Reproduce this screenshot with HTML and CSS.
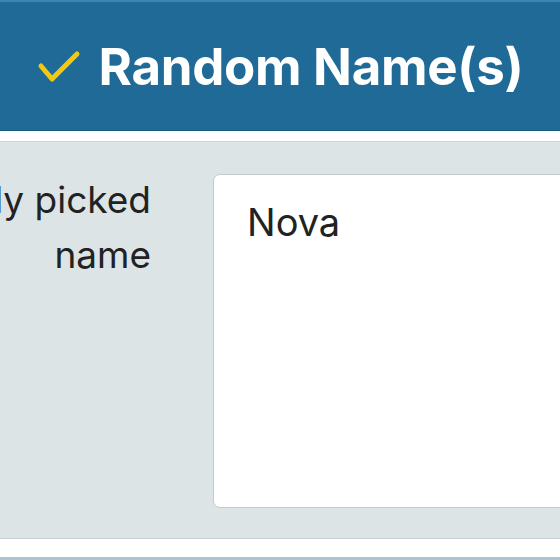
FILE: index.html
```html
<!DOCTYPE html>
<html lang="en">
<head>
    <meta charset="UTF-8">
    <meta name="viewport" content="width=device-width, initial-scale=1.0">
    <title>Random Name(s)</title>
    <link rel="stylesheet" href="styles.css">
</head>
<body>
    <div class="header">
        <svg class="check" width="44" height="36" viewBox="0 0 44 36">
            <path d="M4 17 L15 30 L40 5" fill="none" stroke="#f2c811" stroke-width="5" stroke-linecap="round" stroke-linejoin="round"/>
        </svg>
        <h1>Random Name(s)</h1>
    </div>

    <div class="panel">
        <label class="label" for="picked">Randomly picked<br>name</label>
        <textarea id="picked" class="result" readonly>Nova</textarea>
    </div>

    <div class="footer"></div>
</body>
</html>
```

FILE: styles.css
```css
body {
    margin: 0;
    font-family: Inter, "Noto Sans", sans-serif;
    background: white;
    color: #222;
    overflow: hidden;
}
.header {
    height: 128px;
    background: #1f6a97;
    border-top: 2px solid #3f83b0;
    border-bottom: 1px solid #175a82;
    display: flex;
    align-items: center;
    justify-content: center;
    gap: 18px;
}
.check {
    margin-top: 2px;
}
.header h1 {
    margin: 0;
    color: white;
    font-size: 51px;
    font-weight: 700;
    letter-spacing: -0.3px;
}
.panel {
    margin-top: 10px;
    height: 364px;
    padding-top: 32px;
    background: #dde4e6;
    border-top: 1px solid #cdd4d7;
    border-bottom: 1px solid #c8cfd2;
    display: flex;
    align-items: flex-start;
    gap: 62px;
}
.label {
    flex: 0 0 340px;
    margin-left: -189px;
    margin-top: -2px;
    text-align: right;
    font-size: 37px;
    line-height: 55px;
    color: #222;
}
.result {
    flex: 1 0 auto;
    height: 334px;
    box-sizing: border-box;
    margin-right: -20px;
    padding: 24px 33px;
    border: 1px solid #c3cacd;
    border-radius: 7px;
    background: white;
    font-family: Inter, "Noto Sans", sans-serif;
    font-size: 38px;
    color: #222;
    resize: none;
}
.footer {
    margin-top: 18px;
    height: 3px;
    background: #aec3d1;
}
```
